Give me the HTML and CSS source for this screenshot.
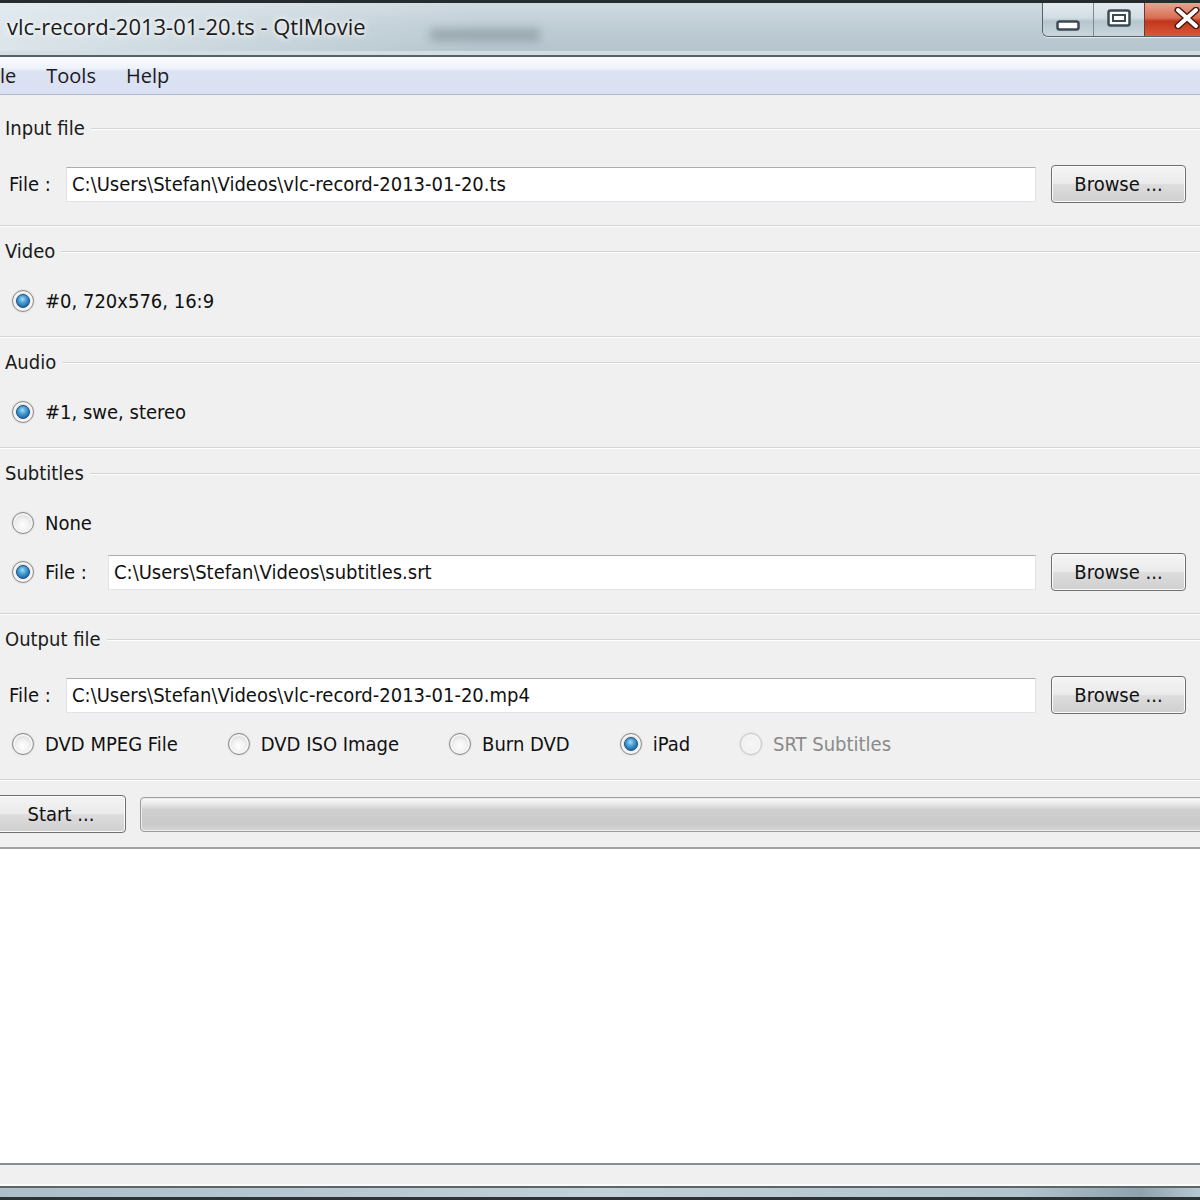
FILE: index.html
```html
<!DOCTYPE html>
<html lang="en">
<head>
    <meta charset="UTF-8">
    <title>QtlMovie</title>
    <link rel="stylesheet" href="styles.css">
</head>
<body>
    <div class="window">
        <div class="titlebar">
            <span class="title">vlc-record-2013-01-20.ts - QtlMovie</span>
            <span class="ghost"></span>
            <div class="caption">
                <span class="cap cap-min">
                    <svg width="24" height="12" viewBox="0 0 24 12"><rect x="1.5" y="1.5" width="21" height="8" rx="2" fill="#fff" stroke="#3c4a55" stroke-width="2.5"/></svg>
                </span>
                <span class="cap cap-max">
                    <svg width="24" height="18" viewBox="0 0 24 18"><rect x="1.5" y="1.5" width="21" height="15" rx="2" fill="#fff" stroke="#3c4a55" stroke-width="2.5"/><rect x="6" y="6" width="12" height="6" fill="none" stroke="#3c4a55" stroke-width="2"/></svg>
                </span>
                <span class="cap cap-close">
                    <svg width="26" height="22" viewBox="0 0 26 22"><path d="M4 3 L22 19 M22 3 L4 19" stroke="#4a1b12" stroke-width="7" stroke-linecap="round"/><path d="M4 3 L22 19 M22 3 L4 19" stroke="#fff" stroke-width="4" stroke-linecap="round"/></svg>
                </span>
            </div>
        </div>

        <div class="menubar">
            <span class="menu-item first">le</span>
            <span class="menu-item">Tools</span>
            <span class="menu-item">Help</span>
        </div>

        <div class="content">
            <section class="group">
                <div class="group-title">Input file</div>
                <div class="file-row">
                    <span class="lbl">File :</span>
                    <div class="field">C:\Users\Stefan\Videos\vlc-record-2013-01-20.ts</div>
                    <button class="btn browse">Browse ...</button>
                </div>
            </section>

            <section class="group">
                <div class="group-title">Video</div>
                <div class="radio-row">
                    <label class="radio checked"><span class="dot"></span>#0, 720x576, 16:9</label>
                </div>
            </section>

            <section class="group">
                <div class="group-title">Audio</div>
                <div class="radio-row">
                    <label class="radio checked"><span class="dot"></span>#1, swe, stereo</label>
                </div>
            </section>

            <section class="group">
                <div class="group-title">Subtitles</div>
                <div class="radio-row">
                    <label class="radio"><span class="dot"></span>None</label>
                </div>
                <div class="file-row sub-file">
                    <label class="radio checked sub-radio"><span class="dot"></span>File :</label>
                    <div class="field">C:\Users\Stefan\Videos\subtitles.srt</div>
                    <button class="btn browse">Browse ...</button>
                </div>
            </section>

            <section class="group">
                <div class="group-title">Output file</div>
                <div class="file-row">
                    <span class="lbl">File :</span>
                    <div class="field">C:\Users\Stefan\Videos\vlc-record-2013-01-20.mp4</div>
                    <button class="btn browse">Browse ...</button>
                </div>
                <div class="radio-row formats">
                    <label class="radio"><span class="dot"></span>DVD MPEG File</label>
                    <label class="radio"><span class="dot"></span>DVD ISO Image</label>
                    <label class="radio"><span class="dot"></span>Burn DVD</label>
                    <label class="radio checked"><span class="dot"></span>iPad</label>
                    <label class="radio disabled"><span class="dot"></span>SRT Subtitles</label>
                </div>
            </section>

            <div class="run-row">
                <button class="btn start">Start ...</button>
                <div class="progress"></div>
            </div>
        </div>

        <div class="log"></div>
        <div class="statusbar"></div>
        <div class="frame-bottom"></div>
    </div>
</body>
</html>
```

FILE: styles.css
```css
* {
    margin: 0;
    padding: 0;
    box-sizing: border-box;
}

body {
    width: 1200px;
    height: 1200px;
    overflow: hidden;
    background: #f0f0f0;
    font-family: 'DejaVu Sans Condensed', 'DejaVu Sans', sans-serif;
    font-size: 20px;
    color: #111;
}

.window {
    display: flex;
    flex-direction: column;
    height: 1200px;
    overflow: hidden;
}

/* title bar */

.titlebar {
    height: 57px;
    display: flex;
    align-items: flex-start;
    border-top: 3px solid #262b2e;
    border-bottom: 2px solid #55626a;
    background: linear-gradient(90deg, rgba(235, 242, 246, 0.7) 0%, rgba(235, 242, 246, 0) 40%),
                linear-gradient(180deg, #cfdae0 0%, #bfcdd5 45%, #b4c4cc 100%);
    box-shadow: inset 0 -4px 0 #d3dde2;
}

.title {
    font-family: 'Open Sans', sans-serif;
    font-size: 22px;
    color: #1a1a1a;
    padding: 8px 0 0 7px;
    text-shadow: 0 0 8px #fff, 0 0 4px #fff;
    white-space: nowrap;
}

.ghost {
    width: 110px;
    height: 12px;
    margin: 26px 0 0 64px;
    background: #7f8c94;
    filter: blur(5px);
    opacity: 0.6;
}

.caption {
    display: flex;
    margin-left: auto;
    height: 34px;
    border: 1px solid #56636b;
    border-top: none;
    border-right: none;
    border-radius: 0 0 0 6px;
    overflow: hidden;
    box-shadow: 0 1px 0 rgba(255, 255, 255, 0.6);
}

.cap {
    display: flex;
    align-items: center;
    justify-content: center;
    height: 100%;
    background: linear-gradient(180deg, #e4ebef 0%, #d2dde3 45%, #b7c6ce 55%, #c9d6dc 100%);
}

.cap-min {
    width: 51px;
    padding-top: 12px;
    border-right: 1px solid #7d8a92;
}

.cap-max {
    width: 50px;
    padding-bottom: 4px;
}

.cap-close {
    width: 56px;
    justify-content: flex-end;
    padding-bottom: 4px;
    border-left: 1px solid #6d3a30;
    background: linear-gradient(180deg, #e8a493 0%, #d86f55 45%, #c2351a 55%, #d9593a 100%);
}

/* menu */

.menubar {
    height: 38px;
    display: flex;
    align-items: center;
    font-family: 'Open Sans', sans-serif;
    font-size: 20px;
    color: #1a1a1a;
    background: linear-gradient(180deg, #fbfcfe 0%, #eef2fa 30%, #dbe3f3 40%, #d9e1f2 100%);
    border-bottom: 1px solid #b3bac7;
}

.menu-item {
    padding: 0 15px;
}

.menu-item.first {
    margin-left: -15px;
}

/* form */

.content {
    padding-top: 21px;
    display: flex;
    flex-direction: column;
}

.group {
    padding-bottom: 22px;
    margin-bottom: 13px;
    border-bottom: 1px solid #d5d5d5;
    box-shadow: 0 1px 0 #fff;
}

.group-title {
    display: flex;
    align-items: center;
    height: 24px;
    padding-left: 5px;
    margin-bottom: 25px;
    gap: 6px;
    color: #1a1a1a;
}

.group-title::after {
    content: '';
    flex: 1;
    border-top: 1px solid #d5d5d5;
    box-shadow: 0 1px 0 #fff;
}

.file-row {
    display: flex;
    align-items: center;
    height: 38px;
    padding: 0 14px 0 9px;
}

.lbl {
    width: 57px;
}

.field {
    flex: 1;
    height: 35px;
    display: flex;
    align-items: center;
    padding-left: 5px;
    margin-right: 15px;
    background: #fff;
    border: 1px solid #e2e3ea;
    border-top-color: #abadb3;
    white-space: nowrap;
}

.btn {
    font-family: inherit;
    font-size: 20px;
    color: #111;
    height: 38px;
    border: 1px solid #707070;
    border-radius: 4px;
    background: linear-gradient(180deg, #f4f4f4 0%, #ebebeb 48%, #dddddd 52%, #cfcfcf 100%);
    box-shadow: inset 0 0 0 1px #fbfbfb;
}

.browse {
    width: 135px;
}

.radio-row {
    display: flex;
    align-items: center;
    height: 26px;
    padding-left: 12px;
}

.radio {
    display: inline-flex;
    align-items: center;
    gap: 11px;
    white-space: nowrap;
}

.dot {
    width: 22px;
    height: 22px;
    border-radius: 50%;
    border: 1px solid #8a8a8a;
    background: radial-gradient(circle at 50% 60%, #ffffff 0%, #f1f1f1 40%, #d7d7d7 75%, #c4c4c4 100%);
    box-shadow: inset 0 0 0 2px #f4f4f4, 0 0 0 1px #e4e4e4;
    display: flex;
    align-items: center;
    justify-content: center;
}

.radio.checked .dot::after {
    content: '';
    width: 12px;
    height: 12px;
    border-radius: 50%;
    border: 1px solid #1c4d7c;
    background: radial-gradient(circle at 45% 35%, #a8dcf7 0%, #4aa3d8 35%, #1d6aa8 75%, #164d80 100%);
}

.radio.disabled {
    color: #8a8a8a;
}

.radio.disabled .dot {
    border-color: #c6c6c6;
    background: radial-gradient(circle, #f7f7f7 0%, #ececec 100%);
}

.sub-file {
    margin-top: 17px;
    padding-left: 12px;
}

.sub-radio {
    width: 96px;
}

.formats {
    margin-top: 17px;
    gap: 50px;
}

.run-row {
    display: flex;
    align-items: center;
    height: 38px;
    margin-top: 2px;
}

.start {
    width: 130px;
    margin-left: -4px;
}

.progress {
    flex: 1;
    height: 35px;
    margin: 0 -10px 0 14px;
    border: 1px solid #9c9c9c;
    border-radius: 4px;
    background: linear-gradient(180deg, #fafafa 0%, #e9e9e9 18%, #d0d0d0 35%, #c9c9c9 80%, #d8d8d8 100%);
    box-shadow: inset 0 0 0 1px #ececec;
}

/* bottom */

.log {
    margin-top: 14px;
    height: 318px;
    flex-shrink: 0;
    background: #fff;
    border-top: 2px solid #a3a3a3;
    border-bottom: 2px solid #8a8d8f;
}

.statusbar {
    height: 21px;
    flex-shrink: 0;
    background: #f0f0f0;
    border-bottom: 2px solid #fafcfc;
}

.frame-bottom {
    flex: 1;
    border-top: 2px solid #5a666c;
    border-bottom: 3px solid #2c3236;
    background: linear-gradient(90deg, #aebfc8 0%, #c2d0d7 50%, #b3c4cc 85%, #8ea3ad 95%, #b8c8d0 100%);
}
```
